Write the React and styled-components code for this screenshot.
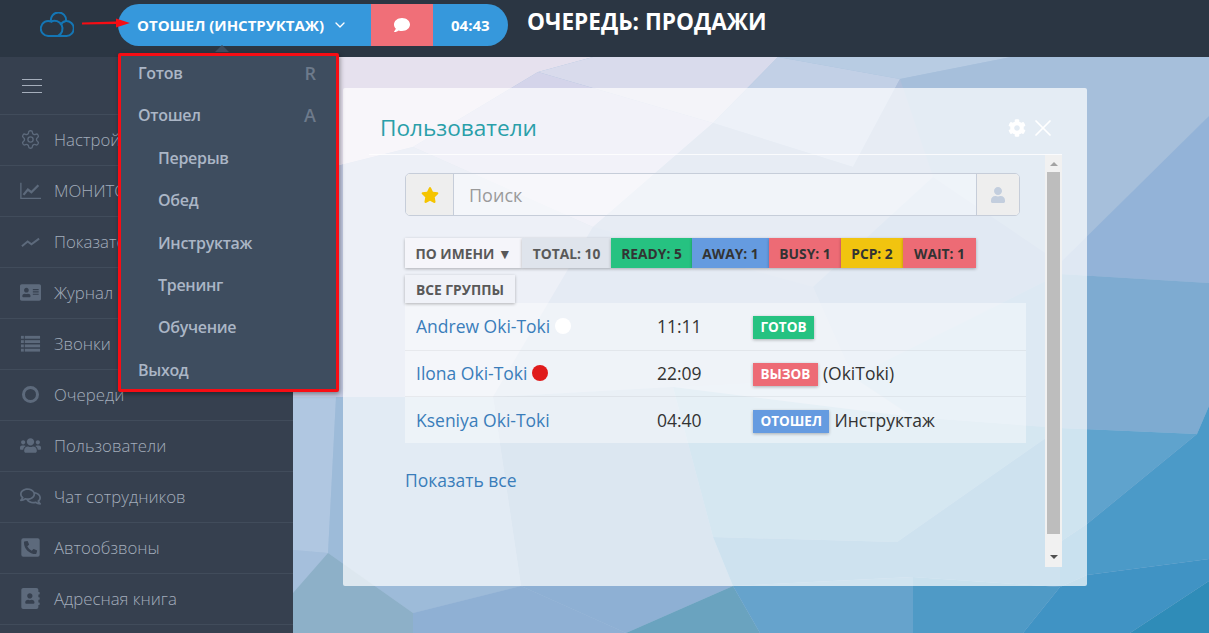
import React from 'react'
import styled, { createGlobalStyle } from 'styled-components'
import { FaStar, FaUser, FaCog, FaUsers, FaRegComments, FaPhoneSquareAlt, FaAddressBook, FaAddressCard, FaComment } from 'react-icons/fa'
import { LuSettings, LuChevronDown, LuX } from 'react-icons/lu'

const GlobalStyle = createGlobalStyle`
  html, body { margin: 0; height: 100%; overflow: hidden; }
  body { font-family: 'Open Sans', 'Noto Sans', sans-serif; background: #2b3643; }
  * { box-sizing: border-box; }
`

const Page = styled.div`
  width: 1209px;
  height: 633px;
  overflow: hidden;
  display: flex;
  flex-direction: column;
  position: relative;
`

const Header = styled.header`
  height: 57px;
  flex: none;
  background: #2b3643;
  display: flex;
  align-items: flex-start;
  padding: 4px 0 0 40px;
`

const Logo = styled.svg`
  width: 34px;
  height: 25px;
  margin-top: 7.5px;
  flex: none;
`

const ArrowMark = styled.svg`
  width: 48px;
  height: 14px;
  margin: 12px -12px 0 8px;
  flex: none;
  position: relative;
  z-index: 3;
`

const Pill = styled.div`
  display: flex;
  height: 42px;
  width: 390px;
  border-radius: 21px;
  overflow: hidden;
  background: #3698dc;
  color: #fff;
  font-weight: 700;
  font-size: 15px;
`

const StatusPart = styled.div`
  width: 253px;
  display: flex;
  align-items: center;
  padding-left: 19px;
  gap: 8px;
  white-space: nowrap;
  svg { width: 16px; height: 16px; }
`

const ChatPart = styled.div`
  width: 62px;
  background: #f06f78;
  display: flex;
  align-items: center;
  justify-content: center;
  svg { width: 16px; height: 16px; }
`

const TimerPart = styled.div`
  flex: 1;
  display: flex;
  align-items: center;
  padding-left: 18px;
`

const QueueTitle = styled.h1`
  margin: 3px 0 0 19px;
  color: #fff;
  font-size: 22.6px;
  font-weight: 700;
  line-height: 30px;
`

const Body = styled.div`
  flex: 1;
  display: flex;
  min-height: 0;
`

const Sidebar = styled.nav`
  width: 293px;
  flex: none;
  background: #36404f;
`

const Burger = styled.div`
  height: 58px;
  border-bottom: 1px solid #414c5b;
  display: flex;
  flex-direction: column;
  justify-content: center;
  gap: 5.5px;
  padding-left: 22px;
  span { display: block; width: 20px; height: 1px; background: #a5aebb; }
`

const NavItem = styled.div`
  height: 51px;
  padding-bottom: 2px;
  border-bottom: 1px solid #414c5b;
  display: flex;
  align-items: center;
  color: #a3adbb;
  font-size: 16.8px;
  font-weight: 300;
  white-space: nowrap;
`

const NavIcon = styled.span`
  width: 54px;
  flex: none;
  padding-left: 20px;
  display: flex;
  align-items: center;
  color: #5d6a7c;
  svg { width: 21px; height: 21px; }
`

const Ring = styled.i`
  display: block;
  width: 17px;
  height: 17px;
  margin-left: 2px;
  border: 3px solid #5d6a7c;
  border-radius: 50%;
`

const Dropdown = styled.div`
  position: absolute;
  left: 118px;
  top: 53px;
  width: 221px;
  height: 339px;
  border: 3px solid #f70d14;
  border-radius: 2px;
  background: #3e4d5f;
  box-shadow: 1px 2px 5px rgba(0, 0, 0, 0.4);
  z-index: 5;
  &::before {
    content: '';
    position: absolute;
    left: 94px;
    top: -11px;
    border: 7px solid transparent;
    border-top: 0;
    border-bottom-color: #3e4d5f;
  }
`

const MenuRow = styled.div`
  height: 42.4px;
  display: flex;
  align-items: flex-start;
  justify-content: space-between;
  padding: 0 20px 0 ${p => (p.$nested ? 37 : 17)}px;
  color: #abb6c6;
  font-size: 16px;
  line-height: 35px;
  font-weight: 600;
  letter-spacing: -0.3px;
  span { color: #6d7a8b; font-size: 18px; letter-spacing: 0; }
`

const Main = styled.main`
  flex: 1;
  position: relative;
  padding: 31px 0 0 50px;
  background: #a9c1dc;
`

const Backdrop = styled.svg`
  position: absolute;
  left: 0;
  top: 0;
  width: 916px;
  height: 576px;
`

const Panel = styled.section`
  position: relative;
  width: 744px;
  height: 498px;
  background: rgba(255, 255, 255, 0.7);
  border-radius: 2px;
  display: flex;
  flex-direction: column;
  padding: 0 25px 0 26px;
`

const PanelHead = styled.div`
  height: 67px;
  flex: none;
  display: flex;
  align-items: center;
  justify-content: space-between;
  padding: 13px 5px 0 12px;
  border-bottom: 1px solid rgba(255, 255, 255, 0.8);
`

const PanelTitle = styled.h2`
  margin: 0 0 0 -1px;
  color: #2a9fa9;
  font-size: 22.6px;
  font-weight: 400;
  line-height: 30px;
`

const PanelTools = styled.div`
  display: flex;
  align-items: center;
  gap: 3px;
  color: #fff;
`

const ScrollArea = styled.div`
  display: flex;
  height: 412px;
`

const ScrollContent = styled.div`
  flex: 1;
  padding: 18px 0 0 36px;
  min-width: 0;
`

const Scrollbar = styled.div`
  width: 17px;
  flex: none;
  background: #f1f1f1;
  display: flex;
  flex-direction: column;
  align-items: center;
  padding-top: 7px;
`

const ScrollThumb = styled.div`
  width: 13px;
  height: 362px;
  margin: 6px 0 21px;
  background: #bdbdbd;
`

const Caret = styled.i`
  display: block;
  width: 0;
  height: 0;
  border: 4px solid transparent;
  ${p => (p.$down
    ? 'border-bottom: 0; border-top-color: #505050;'
    : 'border-top: 0; border-bottom-color: #a3a3a3;')}
`

const SearchBox = styled.div`
  width: 615px;
  height: 43px;
  display: flex;
  border: 1px solid #c6cdd9;
  border-radius: 5px;
  overflow: hidden;
  background: rgba(255, 255, 255, 0.42);
`

const SearchAddon = styled.div`
  width: ${p => p.$w}px;
  flex: none;
  background: #eeeeee;
  display: flex;
  align-items: center;
  justify-content: center;
  color: ${p => p.$color};
  border-${p => p.$side}: 1px solid #c6cdd9;
  svg { width: ${p => p.$icon}px; height: ${p => p.$icon}px; }
`

const SearchInput = styled.div`
  flex: 1;
  padding-left: 15px;
  display: flex;
  align-items: center;
  color: #9a9a9a;
  font-size: 18px;
`

const FilterRow = styled.div`
  display: flex;
  margin-top: ${p => p.$top}px;
`

const Filter = styled.div`
  width: ${p => p.$w}px;
  height: ${p => p.$h || 30}px;
  background: ${p => p.$bg};
  color: ${p => (p.$muted ? '#595959' : '#333')};
  font-size: 13.8px;
  font-weight: 700;
  display: flex;
  align-items: center;
  justify-content: center;
  white-space: nowrap;
  box-shadow: 0 1px 3px rgba(0, 0, 0, 0.28);
`

const Table = styled.div`
  width: 621px;
  background: rgba(255, 255, 255, 0.4);
`

const Row = styled.div`
  height: 46.67px;
  display: flex;
  align-items: center;
  font-size: 17.5px;
  color: #333;
  & + & { border-top: 1px solid rgba(0, 0, 0, 0.05); }
`

const NameCell = styled.div`
  width: 252px;
  padding-left: 11px;
  display: flex;
  align-items: center;
  gap: 5px;
  color: #3a7dba;
`

const Dot = styled.i`
  width: 16px;
  height: 16px;
  border-radius: 50%;
  background: ${p => p.$color};
`

const TimeCell = styled.div`
  width: 96px;
`

const StatusCell = styled.div`
  display: flex;
  align-items: center;
  gap: 5px;
`

const Badge = styled.span`
  background: ${p => p.$bg};
  color: #fff;
  font-size: 13.5px;
  font-weight: 700;
  line-height: 23px;
  height: 23px;
  margin-top: 3px;
  padding: 0 7.5px;
  box-shadow: 0 1px 3px rgba(0, 0, 0, 0.28);
`

const ShowAll = styled.a`
  display: block;
  margin: 24px 0 0;
  color: #3a7dba;
  font-size: 17.5px;
  line-height: 26px;
`

const navItems = [
  { label: 'Настройки', icon: <LuSettings strokeWidth={1.5} /> },
  {
    label: 'МОНИТОРИНГ',
    icon: (
      <svg viewBox="0 0 24 22" fill="none" stroke="currentColor">
        <path d="M1 2v18h23" strokeWidth="1.5" />
        <path d="M4 16l5-6 4 3 8-8" strokeWidth="2.6" />
      </svg>
    ),
  },
  {
    label: 'Показатели',
    icon: (
      <svg viewBox="0 0 22 22" fill="none" stroke="currentColor">
        <path d="M2 16l6-5 4 3 8-6" strokeWidth="2" />
      </svg>
    ),
  },
  { label: 'Журнал', icon: <FaAddressCard /> },
  {
    label: 'Звонки',
    icon: (
      <svg viewBox="0 0 22 22" fill="currentColor">
        <rect x="1" y="3" width="3" height="3" /><rect x="5" y="3" width="16" height="3" />
        <rect x="1" y="7.5" width="3" height="3" /><rect x="5" y="7.5" width="16" height="3" />
        <rect x="1" y="12" width="3" height="3" /><rect x="5" y="12" width="16" height="3" />
        <rect x="1" y="16.5" width="3" height="3" /><rect x="5" y="16.5" width="16" height="3" />
      </svg>
    ),
  },
  { label: 'Очереди', icon: <Ring /> },
  { label: 'Пользователи', icon: <FaUsers /> },
  { label: 'Чат сотрудников', icon: <FaRegComments /> },
  { label: 'Автообзвоны', icon: <FaPhoneSquareAlt /> },
  { label: 'Адресная книга', icon: <FaAddressBook /> },
]

const menuItems = [
  { label: 'Готов', key: 'R' },
  { label: 'Отошел', key: 'A' },
  { label: 'Перерыв', nested: true },
  { label: 'Обед', nested: true },
  { label: 'Инструктаж', nested: true },
  { label: 'Тренинг', nested: true },
  { label: 'Обучение', nested: true },
  { label: 'Выход' },
]

const filters = [
  { label: 'TOTAL: 10', w: 89, bg: '#dfe4ec', muted: true },
  { label: 'READY: 5', w: 81, bg: '#26c281' },
  { label: 'AWAY: 1', w: 77, bg: '#659be0' },
  { label: 'BUSY: 1', w: 72, bg: '#ed6b75' },
  { label: 'PCP: 2', w: 62, bg: '#f1c40f' },
  { label: 'WAIT: 1', w: 73, bg: '#ed6b75' },
]

const users = [
  { name: 'Andrew Oki-Toki', dot: '#fff', time: '11:11', status: 'ГОТОВ', bg: '#26c281' },
  { name: 'Ilona Oki-Toki', dot: '#e01b1b', time: '22:09', status: 'ВЫЗОВ', bg: '#ed6b75', note: '(OkiToki)' },
  { name: 'Kseniya Oki-Toki', time: '04:40', status: 'ОТОШЕЛ', bg: '#659be0', note: 'Инструктаж' },
]

// facets of the wallpaper, in coordinates of the main area
const facets = [
  ['0,0 300,0 245,15 120,90 0,120', '#e6e1ee'],
  ['245,15 300,0 485,0 420,66', '#d9dbec'],
  ['120,90 245,15 420,66 300,170', '#d4d4ea'],
  ['0,120 120,90 300,170 200,340 0,340', '#c4cbe3'],
  ['485,0 607,22 560,110 420,66', '#c2d0e6'],
  ['485,0 718,0 607,22', '#b8cce3'],
  ['718,0 916,0 916,59 767,206 640,120 607,22', '#a6bfdb'],
  ['420,66 560,110 607,22 640,120 520,230 300,170', '#aebfdb'],
  ['640,120 767,206 767,217 560,320 520,230', '#9ab5d6'],
  ['767,206 916,59 916,226 767,217', '#93b3d8'],
  ['300,170 520,230 560,320 380,330 200,340', '#a9bcdb'],
  ['767,217 916,226 916,349 904,377 767,371', '#7eabd1'],
  ['560,320 767,217 767,371 620,360', '#8db4d6'],
  ['200,340 380,330 420,480 440,529 228,529', '#89aed0'],
  ['380,330 620,360 767,371 604,485 420,480', '#73add0'],
  ['767,371 904,377 794,467 767,485', '#5fa3cd'],
  ['904,377 916,349 916,502 794,518 767,530 767,485 794,467', '#4b9ac8'],
  ['420,480 604,485 767,371 767,530 620,520 440,529', '#5a9fca'],
  ['0,340 43,340 35,496 0,493', '#b0c7e1'],
  ['43,340 200,340 228,529 120,556 35,496', '#9dbbd9'],
  ['0,493 35,496 0,536', '#a5bfdc'],
  ['0,536 35,496 120,556 120,576 0,576', '#8db0c8'],
  ['120,556 228,529 333,576 120,576', '#8fb0d4'],
  ['228,529 440,529 333,576', '#8eb0d4'],
  ['440,529 467,576 333,576', '#6aa3bf'],
  ['440,529 620,520 620,576 467,576', '#66a3cc'],
  ['620,520 767,530 730,576 620,576', '#4f9ac6'],
  ['767,530 794,518 916,502 916,524 837,576 730,576', '#4093c4'],
  ['837,576 916,524 916,576', '#2f8cb8'],
]

export default function App() {
  return (
    <Page>
      <GlobalStyle />
      <Header>
        <Logo viewBox="0 0 34 25" fill="none" stroke="#1476b5" strokeWidth="2">
          <path d="M8.500 24a7.500 7.500 0 1 1 2.500-14.500A7.600 7.600 0 1 1 26 9a7.500 7.500 0 0 1 .5 15z" />
          <path d="M11 9.500A8 8 0 0 1 18 24" />
          <path d="M26 9A7.500 7.500 0 0 0 20.500 13" />
        </Logo>
        <ArrowMark viewBox="0 0 48 14">
          <path d="M0 6.500L34 5.500V2.500L48 7 34 11.500V8L0 8.500z" fill="#f70d14" />
        </ArrowMark>
        <Pill>
          <StatusPart>
            ОТОШЕЛ (ИНСТРУКТАЖ)
            <LuChevronDown />
          </StatusPart>
          <ChatPart><FaComment /></ChatPart>
          <TimerPart>04:43</TimerPart>
        </Pill>
        <QueueTitle>ОЧЕРЕДЬ: ПРОДАЖИ</QueueTitle>
      </Header>
      <Body>
        <Sidebar>
          <Burger><span /><span /><span /></Burger>
          {navItems.map(item => (
            <NavItem key={item.label}>
              <NavIcon>{item.icon}</NavIcon>
              {item.label}
            </NavItem>
          ))}
        </Sidebar>
        <Main>
          <Backdrop viewBox="0 0 916 576">
            {facets.map(([points, fill]) => <polygon key={points} points={points} fill={fill} />)}
          </Backdrop>
          <Panel>
            <PanelHead>
              <PanelTitle>Пользователи</PanelTitle>
              <PanelTools>
                <FaCog size={18} />
                <LuX size={28} strokeWidth={1.5} />
              </PanelTools>
            </PanelHead>
            <ScrollArea>
              <ScrollContent>
                <SearchBox>
                  <SearchAddon $w={48} $side="right" $icon={18} $color="#f5c400"><FaStar /></SearchAddon>
                  <SearchInput>Поиск</SearchInput>
                  <SearchAddon $w={43} $side="left" $icon={16} $color="#c3cede"><FaUser /></SearchAddon>
                </SearchBox>
                <FilterRow $top={22}>
                  <Filter $w={117} $bg="#f5f5fa" $muted>ПО ИМЕНИ ▼</Filter>
                  {filters.map(f => <Filter key={f.label} $w={f.w} $bg={f.bg} $muted={f.muted}>{f.label}</Filter>)}
                </FilterRow>
                <FilterRow $top={7}>
                  <Filter $w={110} $h={28} $bg="#f0f2f8" $muted>ВСЕ ГРУППЫ</Filter>
                </FilterRow>
                <Table>
                  {users.map(u => (
                    <Row key={u.name}>
                      <NameCell>{u.name}{u.dot && <Dot $color={u.dot} />}</NameCell>
                      <TimeCell>{u.time}</TimeCell>
                      <StatusCell>
                        <Badge $bg={u.bg}>{u.status}</Badge>
                        {u.note}
                      </StatusCell>
                    </Row>
                  ))}
                </Table>
                <ShowAll>Показать все</ShowAll>
              </ScrollContent>
              <Scrollbar>
                <Caret />
                <ScrollThumb />
                <Caret $down />
              </Scrollbar>
            </ScrollArea>
          </Panel>
        </Main>
      </Body>
      <Dropdown>
        {menuItems.map(m => (
          <MenuRow key={m.label} $nested={m.nested}>
            {m.label}
            {m.key && <span>{m.key}</span>}
          </MenuRow>
        ))}
      </Dropdown>
    </Page>
  )
}
